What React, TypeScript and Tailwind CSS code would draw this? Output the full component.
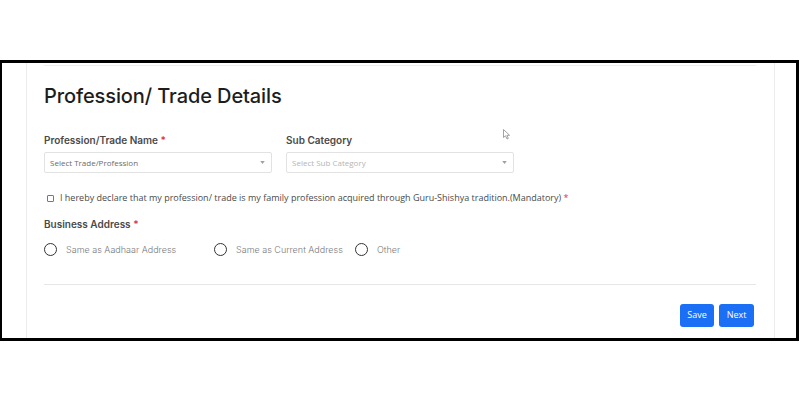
import React from "react";

function Caret() {
  return (
    <svg width="5" height="3" viewBox="0 0 6 4" className="shrink-0">
      <path d="M0 0 L6 0 L3 4 Z" fill="#a0a0a0" />
    </svg>
  );
}

function SelectBox({ placeholder, faded }: { placeholder: string; faded?: boolean }) {
  return (
    <div
      className={`flex h-[21px] w-[228px] items-center justify-between rounded-[2px] border border-[#e2e2e2] bg-white pl-[5px] pr-[6px] text-[8px] [font-family:'Open_Sans',sans-serif] ${
        faded ? "text-[#b5b5b5]" : "text-[#6b6b6b]"
      }`}
    >
      <span>{placeholder}</span>
      <Caret />
    </div>
  );
}

function Radio({ label, width }: { label: string; width: string }) {
  return (
    <label className={`flex items-center gap-[9px] ${width}`}>
      <span className="h-[13px] w-[13px] shrink-0 rounded-full border-[1.5px] border-[#333]" />
      <span className="text-[9px] font-light text-[#7a7a7a] [font-family:Inter,sans-serif]">{label}</span>
    </label>
  );
}

function Cursor() {
  return (
    <svg width="8" height="11" viewBox="0 0 8 11" className="absolute left-[476px] top-[66px]">
      <path d="M0.5 0.5 L0.5 8.5 L2.5 6.8 L4 10 L5.3 9.4 L3.9 6.3 L6.6 6.3 Z" fill="#fff" stroke="#8a8a8a" strokeWidth="0.8" />
    </svg>
  );
}

export default function App() {
  return (
    <div className="h-[400px] w-[800px] bg-white pt-[60px]">
      <div className="flex h-[281px] w-[799px] border-b-[3px] border-l-2 border-r-[3px] border-t-[3px] border-black">
        <div className="w-[25px] border-r border-[#ececec]" />
        <div className="relative flex-1 pl-[17px] pr-[18px]">
          <div className="h-[3px] border-b border-[#ededed]" />
          <Cursor />
          <h1 className="mt-[16px] text-[20px] font-medium leading-[28px] tracking-[-0.1px] text-[#1d1d1d] [font-family:Inter,sans-serif]">
            Profession/ Trade Details
          </h1>

          <div className="mt-[23px] flex gap-[14px]">
            <div className="flex w-[228px] flex-col">
              <div className="mb-[5px] text-[10px] font-semibold leading-[14px] text-[#4a4a4a] [font-family:Inter,sans-serif]">
                Profession/Trade Name <span className="text-[#dc3545]">*</span>
              </div>
              <SelectBox placeholder="Select Trade/Profession" />
            </div>
            <div className="flex w-[228px] flex-col">
              <div className="mb-[5px] text-[10px] font-semibold leading-[14px] text-[#4a4a4a] [font-family:Inter,sans-serif]">
                Sub Category
              </div>
              <SelectBox placeholder="Select Sub Category" faded />
            </div>
          </div>

          <div className="mt-[19px] flex items-center gap-[6px] pl-[3px] text-[9px] leading-[12px] text-[#4a4a4a] [font-family:'Open_Sans',sans-serif]">
            <span className="h-[7px] w-[7px] rounded-[1px] border border-[#777]" />
            <span>
              I hereby declare that my profession/ trade is my family profession acquired through Guru-Shishya tradition.(Mandatory){" "}
              <span className="text-[#dc3545]">*</span>
            </span>
          </div>

          <div className="mt-[13px] text-[10px] font-semibold leading-[14px] text-[#4a4a4a] [font-family:Inter,sans-serif]">
            Business Address <span className="text-[#dc3545]">*</span>
          </div>

          <div className="mt-[12px] flex items-center">
            <Radio label="Same as Aadhaar Address" width="w-[170px]" />
            <Radio label="Same as Current Address" width="w-[141px]" />
            <Radio label="Other" width="w-[60px]" />
          </div>

          <div className="mt-[27px] border-t border-[#e6e6e6]" />

          <div className="mt-[19px] flex justify-end gap-[5px] pr-[2px]">
            <button className="h-[23px] w-[34px] rounded-[3px] bg-[#1a6ff5] text-[9px] text-white [font-family:'Open_Sans',sans-serif]">
              Save
            </button>
            <button className="h-[23px] w-[35px] rounded-[3px] bg-[#1a6ff5] text-[9px] text-white [font-family:'Open_Sans',sans-serif]">
              Next
            </button>
          </div>
        </div>
        <div className="w-[22px] border-l border-[#ececec]" />
      </div>
    </div>
  );
}
